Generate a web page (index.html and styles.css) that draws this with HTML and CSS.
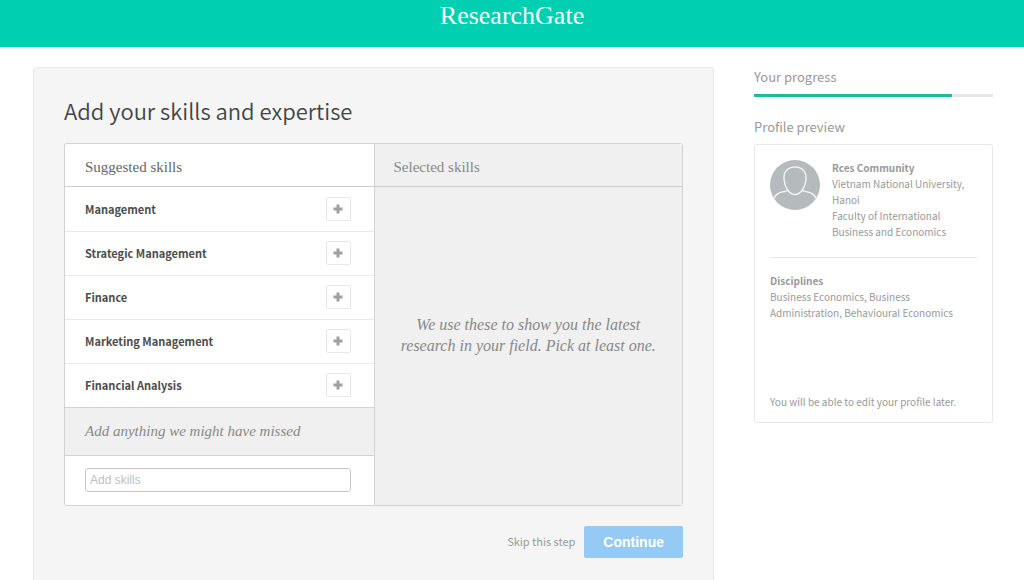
FILE: index.html
```html
<!DOCTYPE html>
<html lang="en">
<head>
<meta charset="utf-8">
<title>ResearchGate</title>
<meta name="viewport" content="width=device-width, initial-scale=1">
<link rel="stylesheet" href="styles.css">
</head>
<body>
<svg class="sprite" aria-hidden="true">
  <symbol id="plus" viewBox="0 0 10 10"><path d="M3.500 0.500h3v3h3v3h-3v3h-3v-3h-3v-3h3z"/></symbol>
</svg>
<header class="topbar"><a class="logo" href="#">ResearchGate</a></header>
<div class="page">
  <main class="panel">
    <h1 class="title">Add your skills and expertise</h1>
    <div class="skills">
      <section class="suggested">
        <h2 class="column-title">Suggested skills</h2>
        <ul class="skill-list">
          <li class="skill">Management<button class="add" type="button" aria-label="Add Management"><svg class="plus"><use href="#plus"/></svg></button></li>
          <li class="skill">Strategic Management<button class="add" type="button" aria-label="Add Strategic Management"><svg class="plus"><use href="#plus"/></svg></button></li>
          <li class="skill">Finance<button class="add" type="button" aria-label="Add Finance"><svg class="plus"><use href="#plus"/></svg></button></li>
          <li class="skill">Marketing Management<button class="add" type="button" aria-label="Add Marketing Management"><svg class="plus"><use href="#plus"/></svg></button></li>
          <li class="skill">Financial Analysis<button class="add" type="button" aria-label="Add Financial Analysis"><svg class="plus"><use href="#plus"/></svg></button></li>
        </ul>
        <label class="missed" for="skill-input">Add anything we might have missed</label>
        <div class="entry"><input class="skill-input" id="skill-input" type="text" placeholder="Add skills"></div>
      </section>
      <section class="selected">
        <h2 class="column-title">Selected skills</h2>
        <p class="hint">We use these to show you the latest<br>research in your field. Pick at least one.</p>
      </section>
    </div>
    <div class="actions">
      <a class="skip" href="#">Skip this step</a>
      <button class="continue" type="button">Continue</button>
    </div>
  </main>
  <aside class="sidebar">
    <h2 class="side-title">Your progress</h2>
    <div class="progress" role="progressbar" aria-label="Your progress" aria-valuenow="83" aria-valuemin="0" aria-valuemax="100"><div class="progress-fill" style="width: 83%"></div></div>
    <h2 class="side-title">Profile preview</h2>
    <div class="card">
      <div class="person">
        <svg class="avatar" viewBox="0 0 50 50" aria-hidden="true">
          <circle class="avatar-disc" cx="25" cy="25" r="25"/>
          <path class="avatar-line" d="M25 7C17.500 7 13.500 12 14 19C14.500 27 19 34.500 25 34.500C31 34.500 35.500 27 36 19C36.500 12 32.500 7 25 7Z"/>
          <path class="avatar-line" d="M4 38.500C5.500 34.500 9 32.500 13 31.800C15.500 31.300 17.500 31 18.800 30M46 38.500C44.500 34.500 41 32.500 37 31.800C34.500 31.300 32.500 31 31.200 30"/>
        </svg>
        <div class="details">
          <strong>Rces Community</strong>
          <span>Vietnam National University, Hanoi</span>
          <span>Faculty of International Business and Economics</span>
        </div>
      </div>
      <div class="details disciplines">
        <strong>Disciplines</strong>
        <span>Business Economics, Business Administration, Behavioural Economics</span>
      </div>
      <p class="note">You will be able to edit your profile later.</p>
    </div>
  </aside>
</div>
</body>
</html>
```
FILE: styles.css
```css
* { box-sizing: border-box; }
body {
  margin: 0;
  background: #fff;
  color: #444;
  font-family: "Noto Sans CJK SC", "Open Sans", sans-serif;
}
h1, h2, p, ul { margin: 0; padding: 0; font-weight: 400; }
a { color: inherit; text-decoration: none; }
button { cursor: pointer; }
.sprite { display: none; }

.topbar {
  height: 47px;
  background: #00d0b1;
  text-align: center;
}
.logo {
  color: #fff;
  font: 26px/32px "Liberation Serif", serif;
}

.page {
  display: grid;
  grid-template-columns: minmax(0, 1fr) 239px;
  gap: 40px;
  padding: 20px 31px 0 33px;
  align-items: start;
}

.panel {
  padding: 29px 30px;
  border: 1px solid #e8e8e8;
  border-radius: 3px;
  background: #f5f5f5;
}
.title {
  margin-bottom: 20px;
  color: #444;
  font-size: 22px;
  font-weight: 350;
  line-height: 26px;
}
.skills {
  display: grid;
  grid-template-columns: 1fr 1fr;
  border: 1px solid #d2d2d2;
  border-radius: 3px;
  background: #fff;
}
.column-title {
  height: 43px;
  padding: 2px 20px 0;
  border-bottom: 1px solid #ccc;
  color: #666;
  font: 15px/42px "Liberation Serif", serif;
}
.skill-list { padding-top: 1px; list-style: none; }
.skill {
  display: flex;
  align-items: center;
  justify-content: space-between;
  height: 44px;
  padding: 0 23px 2px 20px;
  border-bottom: 1px solid #e8e8e8;
  color: #4c4c4c;
  font-size: 11px;
  font-weight: 700;
}
.skill:last-child { border-bottom-color: #d2d2d2; }
.add {
  display: flex;
  align-items: center;
  justify-content: center;
  width: 25px;
  height: 24px;
  padding: 0;
  border: 1px solid #e8e8e8;
  border-radius: 2px;
  background: #fff;
}
.plus { width: 10px; height: 10px; fill: #a0a0a0; }
.missed {
  display: block;
  padding: 0 20px;
  border-bottom: 1px solid #d2d2d2;
  background: #f0f0f0;
  color: #888;
  font: italic 15px/47px "Liberation Serif", serif;
}
.entry { padding: 12px 23px 13px 20px; }
.skill-input {
  display: block;
  width: 100%;
  height: 24px;
  padding: 0 4px;
  border: 1px solid #c8c8c8;
  border-radius: 3px;
  background: #fff;
  font: 12px "Liberation Sans", sans-serif;
}
.skill-input::placeholder { color: #c0c0c0; }
.selected {
  display: flex;
  flex-direction: column;
  border-left: 1px solid #d2d2d2;
  background: #f0f0f0;
}
.selected .column-title { padding-left: 19px; color: #888; }
.hint {
  margin: auto;
  padding-bottom: 22px;
  color: #888;
  font: italic 16px/21px "Liberation Serif", serif;
  text-align: center;
}
.actions {
  display: flex;
  align-items: center;
  justify-content: flex-end;
  gap: 9px;
  margin-top: 20px;
}
.skip { padding-bottom: 3px; color: #999; font-size: 11px; line-height: 16px; }
.continue {
  height: 32px;
  padding: 0 19px;
  border: 0;
  border-radius: 2px;
  background: #95caf5;
  color: #fff;
  font: 700 14px "Liberation Sans", sans-serif;
}

.side-title {
  color: #999;
  font-size: 13px;
  line-height: 20px;
}
.progress {
  height: 3px;
  margin: 7px 0 20px;
  background: #e6e6e6;
}
.progress-fill { height: 100%; background: #1fb9a0; }
.card {
  display: flex;
  flex-direction: column;
  min-height: 279px;
  margin-top: 7px;
  padding: 15px 15px 14px;
  border: 1px solid #e8e8e8;
  border-radius: 3px;
}
.person {
  display: flex;
  gap: 12px;
  padding-bottom: 17px;
  border-bottom: 1px solid #e8e8e8;
}
.avatar { flex: none; width: 50px; height: 50px; }
.avatar-disc { fill: #b5babd; }
.avatar-line { fill: none; stroke: #f0f2f3; stroke-width: 1.5; }
.details {
  color: #999;
  font-size: 10px;
  line-height: 16px;
}
.details strong, .details span { display: block; }
.disciplines { margin-top: 15px; }
.note {
  margin-top: auto;
  color: #999;
  font-size: 10px;
  line-height: 12px;
}
```
